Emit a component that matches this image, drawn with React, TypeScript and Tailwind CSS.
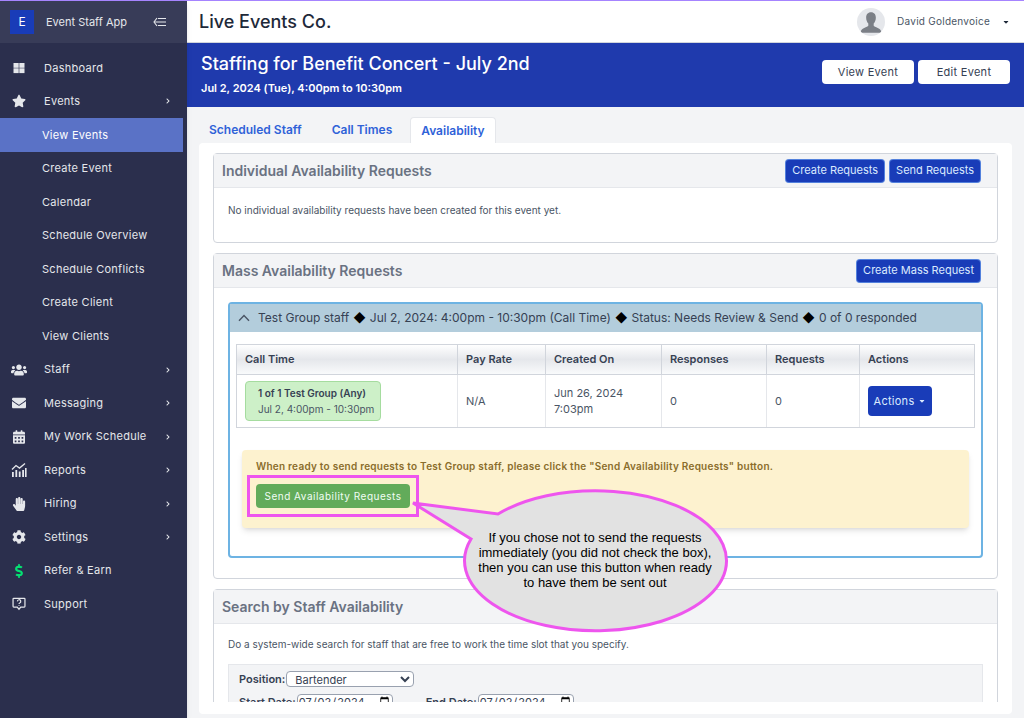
import { FaStar, FaUsers, FaEnvelope, FaCalendarAlt, FaHandPaper, FaCog, FaDollarSign, FaChevronRight, FaCaretDown } from "react-icons/fa";

const sans = { fontFamily: "Inter, 'Noto Sans', sans-serif" };

function DashIcon() {
  return (
    <svg viewBox="0 0 12 12" className="w-3 h-3" fill="currentColor">
      <rect x="0.5" y="1" width="5.2" height="4.8" />
      <rect x="6.3" y="1" width="5.2" height="4.8" />
      <rect x="0.5" y="6.3" width="5.2" height="4.8" />
      <rect x="6.3" y="6.3" width="5.2" height="4.8" />
    </svg>
  );
}

function ChartIcon() {
  return (
    <svg viewBox="0 0 16 16" className="w-4 h-4" fill="currentColor">
      <rect x="1" y="10" width="1.8" height="5" />
      <rect x="4.4" y="8" width="1.8" height="7" />
      <rect x="7.8" y="9.5" width="1.8" height="5.5" />
      <rect x="11.2" y="8" width="1.8" height="7" />
      <rect x="14" y="6" width="1.6" height="9" />
      <path d="M1 7.5 5 3.5l3.5 2.6L14 1.5" fill="none" stroke="currentColor" strokeWidth="1.3" />
    </svg>
  );
}

function SupportIcon() {
  return (
    <svg viewBox="0 0 16 16" className="w-3.5 h-3.5" fill="none" stroke="currentColor" strokeWidth="1.4">
      <path d="M2 1.5h12a.8.8 0 0 1 .8.8v8.4a.8.8 0 0 1-.8.8H10l-2 2.5-2-2.5H2a.8.8 0 0 1-.8-.8V2.300a.8.8 0 0 1 .8-.8z" />
      <path d="M6.200 5a1.900 1.900 0 1 1 2.600 1.800c-.6.300-.8.600-.8 1.300" />
      <path d="M8 9.200v.9" />
    </svg>
  );
}

function CollapseIcon() {
  return (
    <svg viewBox="0 0 14 10" className="w-3.5 h-2.5" fill="none" stroke="currentColor" strokeWidth="1.100">
      <path d="M4 1 1 5l3 4" />
      <path d="M1 5h12M5 1.500h8M5 8.500h8" />
    </svg>
  );
}

function Avatar() {
  return (
    <svg viewBox="0 0 26 26" className="w-7 h-7 rounded-full bg-gray-200">
      <path
        d="M13 4c3 0 4.500 2.200 4.500 5 0 2.300-.9 4.200-2 5.300v2c0 1 3.500 1.800 5.500 3.200 1 .7 1.500 2 1.500 3.500H3.500c0-1.500.5-2.800 1.500-3.500 2-1.400 5.500-2.200 5.500-3.200v-2c-1.100-1.100-2-3-2-5.300 0-2.800 1.500-5 4.500-5z"
        fill="#7b7f86"
      />
    </svg>
  );
}

const NAV = [
  { label: "Dashboard", icon: <DashIcon /> },
  { label: "Events", icon: <FaStar className="w-3.5 h-3.5" />, arrow: true },
  { label: "View Events", sub: true, active: true },
  { label: "Create Event", sub: true },
  { label: "Calendar", sub: true },
  { label: "Schedule Overview", sub: true },
  { label: "Schedule Conflicts", sub: true },
  { label: "Create Client", sub: true },
  { label: "View Clients", sub: true },
  { label: "Staff", icon: <FaUsers className="w-4 h-4" />, arrow: true },
  { label: "Messaging", icon: <FaEnvelope className="w-3.5 h-3.5" />, arrow: true },
  { label: "My Work Schedule", icon: <FaCalendarAlt className="w-3 h-3.5" />, arrow: true },
  { label: "Reports", icon: <ChartIcon />, arrow: true },
  { label: "Hiring", icon: <FaHandPaper className="w-3.5 h-3.5" />, arrow: true },
  { label: "Settings", icon: <FaCog className="w-3.5 h-3.5" />, arrow: true },
  { label: "Refer & Earn", icon: <FaDollarSign className="w-3.5 h-3.5 text-green-400" /> },
  { label: "Support", icon: <SupportIcon /> },
];

function Sidebar() {
  return (
    <aside className="w-[187px] shrink-0 bg-[#2b2f4d] text-gray-200 shadow-md z-10 flex flex-col">
      <div className="h-[43px] shrink-0 bg-[#383c58] border-t border-violet-400 flex items-center pl-2.5 pr-5 text-[11px]">
        <span className="w-6 h-6 bg-blue-800 flex items-center justify-center text-xs text-white">E</span>
        <span className="ml-3 flex-1">Event Staff App</span>
        <CollapseIcon />
      </div>
      <nav className="flex flex-col h-[570px] mt-2">
        {NAV.map((item) => (
          <div key={item.label} className={`flex-1 flex items-center text-[11px] tracking-wide ${item.active ? "bg-[#5a72c6] text-white mr-1" : ""}`}>
            {item.sub ? (
              <span className="pl-10.5">{item.label}</span>
            ) : (
              <>
                <span className="w-11 flex justify-center pr-1.5 shrink-0">{item.icon}</span>
                <span className="flex-1">{item.label}</span>
                {item.arrow && <FaChevronRight className="w-1.5 h-1.5 mr-4" />}
              </>
            )}
          </div>
        ))}
      </nav>
    </aside>
  );
}

function BlueBtn({ children }: { children: React.ReactNode }) {
  return (
    <button className="bg-blue-800 border border-blue-300/50 text-blue-100 text-[11px] px-1.5 h-6 rounded-sm whitespace-nowrap">
      {children}
    </button>
  );
}

function Card({ title, actions, children }: { title: string; actions?: React.ReactNode; children: React.ReactNode }) {
  return (
    <section className="border border-gray-300 rounded-sm bg-white">
      <div className="h-8.5 bg-gray-100 border-b border-gray-200 flex items-center justify-between pl-2 pr-4">
        <h2 className="text-sm font-semibold text-gray-500">{title}</h2>
        <div className="flex gap-1">{actions}</div>
      </div>
      {children}
    </section>
  );
}

const TH = "h-7.5 flex items-center px-2 text-left font-semibold text-gray-700 border-r border-b border-gray-300 bg-gradient-to-b from-white via-gray-200 to-gray-50";
const TD = "px-2 border-r border-gray-200 text-gray-600";

function CallTable() {
  return (
    <div className="grid grid-cols-[221px_88px_116px_105px_93px_1fr] border border-gray-300 text-[11px]">
      <div className={TH}>Call Time</div>
      <div className={TH}>Pay Rate</div>
      <div className={TH}>Created On</div>
      <div className={TH}>Responses</div>
      <div className={TH}>Requests</div>
      <div className={`${TH} border-r-0`}>Actions</div>
      <div className={`${TD} h-13 flex items-center`}>
        <div className="w-34 h-10 bg-[#cdf0c8] border border-[#a5dc9f] rounded flex flex-col justify-center pl-3 text-[10px] leading-4 text-gray-600">
          <span className="font-semibold text-gray-700">1 of 1 Test Group (Any)</span>
          <span>Jul 2, 4:00pm - 10:30pm</span>
        </div>
      </div>
      <div className={`${TD} flex items-center`}>N/A</div>
      <div className={`${TD} flex flex-col justify-center leading-4`}>
        <span>Jun 26, 2024</span>
        <span>7:03pm</span>
      </div>
      <div className={`${TD} flex items-center`}>0</div>
      <div className={`${TD} flex items-center`}>0</div>
      <div className="px-2 flex items-center">
        <button className="bg-blue-800 text-blue-100 text-[11px] tracking-wide h-7.5 w-16 rounded-sm flex items-center justify-center gap-1">
          Actions <FaCaretDown className="w-2 h-2" />
        </button>
      </div>
    </div>
  );
}

function MassBox() {
  return (
    <div className="border-2 border-[#6db3e3] rounded-sm">
      <div className="h-7 bg-[#b3cddc] flex items-center gap-1 pl-2 text-xs whitespace-nowrap text-gray-700">
        <svg viewBox="0 0 12 7" className="w-3 h-2 mr-1 text-gray-600" fill="none" stroke="currentColor" strokeWidth="1.4">
          <path d="M1 6.200 6 1l5 5.200" />
        </svg>
        <span>Test Group staff</span>
        <span className="text-black">◆</span>
        <span>Jul 2, 2024: 4:00pm - 10:30pm (Call Time)</span>
        <span className="text-black">◆</span>
        <span>Status: Needs Review &amp; Send</span>
        <span className="text-black">◆</span>
        <span>0 of 0 responded</span>
      </div>
      <div className="px-1.5 pt-3 pb-7">
        <CallTable />
        <div className="mt-5.5 mx-1.5 h-19.5 bg-[#fdf2cf] rounded-sm shadow-md px-3.5 pt-2">
          <p className="text-[10px] font-semibold text-[#8a6d2b] tracking-wide leading-4">
            When ready to send requests to Test Group staff, please click the "Send Availability Requests" button.
          </p>
          <button className="mt-2.5 h-6 w-38.5 bg-[#62ab5a] rounded-sm text-[10px] tracking-wider text-green-50">
            Send Availability Requests
          </button>
        </div>
      </div>
    </div>
  );
}

function Callout() {
  return (
    <>
      <svg viewBox="0 0 500 170" className="absolute left-60 top-[470px] w-[500px] h-[170px]">
        <rect x="8.500" y="6.500" width="169" height="39" fill="none" stroke="#ee55ee" strokeWidth="3" />
        <path
          d="M258 44 A131 70 0 1 1 231 69 L173 33 Z"
          fill="#e2e2e2"
          stroke="#ee55ee"
          strokeWidth="3"
          strokeLinejoin="miter"
        />
      </svg>
      <div
        className="absolute left-[464px] top-[530px] w-[262px] text-center text-[13px] leading-[15px] text-black"
        style={{ fontFamily: "'Liberation Sans', sans-serif" }}
      >
        If you chose not to send the requests
        <br />
        immediately (you did not check the box),
        <br />
        then you can use this button when ready
        <br />
        to have them be sent out
      </div>
    </>
  );
}

export default function App() {
  return (
    <div className="relative flex h-screen overflow-hidden bg-gray-100" style={sans}>
      <Sidebar />
      <div className="flex-1 min-w-0 flex flex-col">
        <header className="h-[43px] shrink-0 bg-white border-t border-violet-400 border-b border-b-gray-300 flex items-center pl-3 pr-3.5">
          <span className="flex-1 text-lg font-medium text-gray-800">Live Events Co.</span>
          <Avatar />
          <span className="ml-3 text-[10px] text-gray-600 tracking-wide">David Goldenvoice</span>
          <FaCaretDown className="ml-3 w-2 h-2 text-gray-800" />
        </header>
        <div className="h-16 shrink-0 bg-[#1f3aad] flex items-center justify-between pl-3.5 pr-3.5 text-white">
          <div className="-mt-0.5">
            <h1 className="text-lg font-medium leading-7">Staffing for Benefit Concert - July 2nd</h1>
            <p className="text-[11px] font-semibold leading-5">Jul 2, 2024 (Tue), 4:00pm to 10:30pm</p>
          </div>
          <div className="flex gap-1 -mt-1.5">
            <button className="bg-white text-gray-700 text-[11px] tracking-wide w-23 h-6 rounded-sm">View Event</button>
            <button className="bg-white text-gray-700 text-[11px] tracking-wide w-23 h-6 rounded-sm">Edit Event</button>
          </div>
        </div>
        <div className="flex pl-3 pt-2.5 h-9 shrink-0 text-xs font-semibold text-[#2f62d8]">
          <span className="px-2.5 flex items-center">Scheduled Staff</span>
          <span className="px-2.5 ml-2.5 flex items-center">Call Times</span>
          <span className="px-2.5 ml-2 flex items-center bg-white border border-gray-200 border-b-0 rounded-t-sm">Availability</span>
        </div>
        <div className="flex-1 min-h-0 ml-3 mr-3 mb-1 pb-3 bg-white flex flex-col rounded-sm">
          <div className="flex-1 min-h-0 overflow-hidden px-3.5 pt-2.5 flex flex-col gap-2.5">
            <Card
              title="Individual Availability Requests"
              actions={
                <>
                  <BlueBtn>Create Requests</BlueBtn>
                  <BlueBtn>Send Requests</BlueBtn>
                </>
              }
            >
              <p className="h-13.5 px-3.5 pt-3.5 text-[10px] leading-4 text-gray-600">No individual availability requests have been created for this event yet.</p>
            </Card>
            <Card title="Mass Availability Requests" actions={<BlueBtn>Create Mass Request</BlueBtn>}>
              <div className="px-3.5 pt-3.5 pb-5">
                <MassBox />
              </div>
            </Card>
            <Card title="Search by Staff Availability">
              <div className="px-3.5 pt-3">
                <p className="text-[10px] text-gray-600 leading-4">
                  Do a system-wide search for staff that are free to work the time slot that you specify.
                </p>
                <div className="mt-3 bg-gray-100 border border-gray-200 px-2.5 py-1.5 text-[11px] text-gray-700">
                  <div className="flex items-center gap-px">
                    <label className="font-semibold">Position:</label>
                    <select className="w-32 h-4 border border-gray-400 rounded-sm bg-white text-[11px] pl-1" defaultValue="Bartender">
                      <option>Bartender</option>
                    </select>
                  </div>
                  <div className="flex items-center gap-px mt-1.5">
                    <label className="font-semibold">Start Date:</label>
                    <input type="date" defaultValue="2024-07-02" className="w-24 h-4 border border-gray-400 rounded-sm bg-white text-[11px]" />
                    <label className="font-semibold ml-8">End Date:</label>
                    <input type="date" defaultValue="2024-07-02" className="w-24 h-4 border border-gray-400 rounded-sm bg-white text-[11px]" />
                  </div>
                </div>
              </div>
            </Card>
          </div>
        </div>
      </div>
      <Callout />
    </div>
  );
}
